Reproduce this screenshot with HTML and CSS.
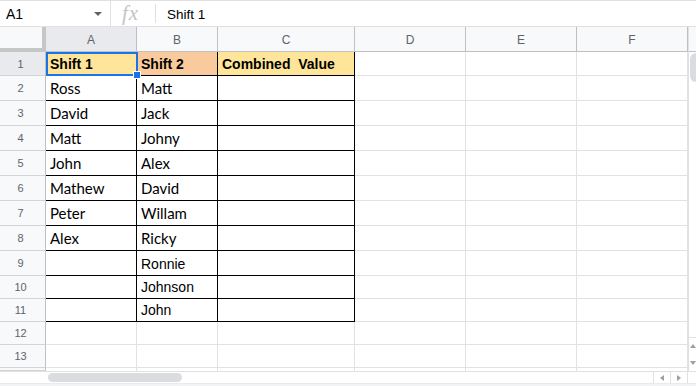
FILE: index.html
```html
<!DOCTYPE html>
<html>
<head>
<meta charset="utf-8">
<link rel="stylesheet" href="styles.css">
</head>
<body>
<div class="app">
  <div class="formula-bar">
    <div class="name-box"><span class="name">A1</span><span class="caret"></span></div>
    <div class="fx-box"><span class="fx">fx</span></div>
    <div class="formula">Shift 1</div>
  </div>
  <div class="sheet">
    <div class="grid">
      <div class="corner"></div>
      <div class="ch on">A</div><div class="ch">B</div><div class="ch">C</div><div class="ch">D</div><div class="ch">E</div><div class="ch">F</div>

      <div class="rh on">1</div>
      <div class="c t hd yellow a1">Shift 1<span class="sel"><span class="handle"></span></span></div>
      <div class="c t hd orange">Shift 2</div>
      <div class="c t hd yellow">Combined&nbsp; Value</div>
      <div class="c"></div><div class="c"></div><div class="c"></div>

      <div class="rh">2</div>
      <div class="c t">Ross</div><div class="c t">Matt</div><div class="c t"></div>
      <div class="c"></div><div class="c"></div><div class="c"></div>

      <div class="rh">3</div>
      <div class="c t">David</div><div class="c t">Jack</div><div class="c t"></div>
      <div class="c"></div><div class="c"></div><div class="c"></div>

      <div class="rh">4</div>
      <div class="c t">Matt</div><div class="c t">Johny</div><div class="c t"></div>
      <div class="c"></div><div class="c"></div><div class="c"></div>

      <div class="rh">5</div>
      <div class="c t">John</div><div class="c t">Alex</div><div class="c t"></div>
      <div class="c"></div><div class="c"></div><div class="c"></div>

      <div class="rh">6</div>
      <div class="c t">Mathew</div><div class="c t">David</div><div class="c t"></div>
      <div class="c"></div><div class="c"></div><div class="c"></div>

      <div class="rh">7</div>
      <div class="c t">Peter</div><div class="c t">Willam</div><div class="c t"></div>
      <div class="c"></div><div class="c"></div><div class="c"></div>

      <div class="rh">8</div>
      <div class="c t">Alex</div><div class="c t">Ricky</div><div class="c t"></div>
      <div class="c"></div><div class="c"></div><div class="c"></div>

      <div class="rh">9</div>
      <div class="c t"></div><div class="c t arial">Ronnie</div><div class="c t"></div>
      <div class="c"></div><div class="c"></div><div class="c"></div>

      <div class="rh">10</div>
      <div class="c t"></div><div class="c t arial">Johnson</div><div class="c t"></div>
      <div class="c"></div><div class="c"></div><div class="c"></div>

      <div class="rh">11</div>
      <div class="c t"></div><div class="c t arial">John</div><div class="c t"></div>
      <div class="c"></div><div class="c"></div><div class="c"></div>

      <div class="rh">12</div>
      <div class="c"></div><div class="c"></div><div class="c"></div>
      <div class="c"></div><div class="c"></div><div class="c"></div>

      <div class="rh">13</div>
      <div class="c"></div><div class="c"></div><div class="c"></div>
      <div class="c"></div><div class="c"></div><div class="c"></div>

      <div class="rh"></div>
      <div class="c"></div><div class="c"></div><div class="c"></div>
      <div class="c"></div><div class="c"></div><div class="c"></div>
    </div>
    <div class="vscroll">
      <div class="vs-head"></div>
      <div class="vs-track"><div class="vs-thumb"></div></div>
      <div class="vs-btns">
        <span class="vs-btn"><span class="tri up"></span></span>
        <span class="vs-btn"><span class="tri down"></span></span>
      </div>
    </div>
  </div>
  <div class="hscroll">
    <div class="hs-track"><div class="hs-thumb"></div></div>
    <div class="hs-btn"><span class="tri left"></span></div>
    <div class="hs-btn"><span class="tri right"></span></div>
    <div class="hs-corner"></div>
  </div>
  <div class="tabs"></div>
</div>
</body>
</html>
```

FILE: styles.css
```css
* { box-sizing: border-box; }
html, body { margin: 0; padding: 0; background: #fff; }
.app {
  width: 696px;
  height: 386px;
  overflow: hidden;
  font-family: "Liberation Sans", Arial, sans-serif;
  color: #000;
  display: flex;
  flex-direction: column;
}

/* formula bar */
.formula-bar {
  height: 27px;
  flex: none;
  border-top: 1px solid #e0e0e0;
  border-bottom: 1px solid #e0e0e0;
  display: flex;
  align-items: stretch;
}
.name-box {
  width: 111px;
  border-right: 1px solid #e0e0e0;
  display: flex;
  align-items: center;
  padding-left: 6px;
  padding-right: 8px;
  justify-content: space-between;
}
.name { font-size: 14px; line-height: 1; padding-top: 1px; }
.caret {
  width: 0; height: 0;
  border-left: 4.5px solid transparent;
  border-right: 4.5px solid transparent;
  border-top: 4px solid #5f6368;
  margin-top: 1px;
}
.fx-box {
  width: 45px;
  display: flex;
  align-items: center;
  padding-left: 11px;
  position: relative;
}
.fx-box::after {
  content: "";
  position: absolute;
  right: 0; top: 3px; bottom: 3px;
  width: 1px;
  background: #e0e0e0;
}
.fx {
  font-family: "Liberation Serif", serif;
  font-style: italic;
  font-size: 21px;
  color: #c4c4c4;
  letter-spacing: 1px;
  line-height: 1;
}
.formula {
  padding-left: 11px;
  font-size: 13.5px;
  display: flex;
  align-items: center;
  padding-top: 1px;
}

/* sheet */
.sheet {
  display: flex;
  flex: none;
  height: 344px;
}
.grid {
  width: 688px;
  display: grid;
  grid-template-columns: 46px 91px 81px 137px 111px 111px 111px;
  grid-template-rows: 25px 24px repeat(8, 25px) repeat(4, 23px) 3px;
  overflow: hidden;
}
.corner {
  background: #f8f9fa;
  border-right: 4px solid #c4c7c5;
  border-bottom: 4px solid #c4c7c5;
}
.ch {
  background: #f8f9fa;
  border-right: 1px solid #c0c0c0;
  border-bottom: 1px solid #c0c0c0;
  font-size: 12px;
  color: #5f6368;
  display: flex;
  align-items: center;
  justify-content: center;
  padding-top: 1px;
}
.rh {
  background: #f8f9fa;
  border-right: 1px solid #c0c0c0;
  border-bottom: 1px solid #d4d4d4;
  font-size: 11px;
  color: #5f6368;
  display: flex;
  align-items: center;
  justify-content: center;
  padding-right: 4px;
}
.ch.on, .rh.on { background: #e8eaed; }

.c {
  border-right: 1px solid #e2e2e2;
  border-bottom: 1px solid #e2e2e2;
  font-family: Lato, "Liberation Sans", sans-serif;
  font-size: 15px;
  line-height: 1;
  display: flex;
  align-items: flex-end;
  padding: 0 3px 4px 4px;
  white-space: nowrap;
}
.c.t { border-right-color: #000; border-bottom-color: #000; }
.c.hd {
  font-family: "Liberation Sans", Arial, sans-serif;
  font-weight: bold;
  font-size: 14px;
  padding-bottom: 4px;
}
.c.arial { font-family: "Liberation Sans", Arial, sans-serif; font-size: 14px; }
.yellow { background: #ffe599; }
.orange { background: #f9cb9c; }

.a1 { position: relative; }
.sel {
  position: absolute;
  left: 0; top: 0; right: -2px; bottom: -1px;
  border: 2px solid #1a73e8;
}
.handle {
  position: absolute;
  right: -5px; bottom: -5px;
  width: 8px; height: 8px;
  background: #1a73e8;
  border: 1px solid #fff;
}

/* vertical scroll */
.vscroll {
  width: 8px;
  display: flex;
  flex-direction: column;
  border-left: 1px solid #e0e0e0;
}
.vs-head { height: 25px; background: #f8f9fa; border-bottom: 1px solid #c0c0c0; flex: none; }
.vs-track { flex: 1; padding-top: 1px; }
.vs-thumb { width: 7px; height: 29px; background: #dadce0; border-radius: 6px 0 0 6px; margin-left: 1px; }
.vs-btns {
  flex: none;
  height: 34px;
  border-top: 1px solid #e0e0e0;
  display: flex;
  flex-direction: column;
}
.vs-btn { flex: 1; display: flex; align-items: center; justify-content: center; }

.tri { width: 0; height: 0; display: block; }
.tri.up { border-left: 3px solid transparent; border-right: 3px solid transparent; border-bottom: 4px solid #9aa0a6; }
.tri.down { border-left: 3px solid transparent; border-right: 3px solid transparent; border-top: 4px solid #9aa0a6; }
.tri.left { border-top: 3px solid transparent; border-bottom: 3px solid transparent; border-right: 4px solid #9aa0a6; }
.tri.right { border-top: 3px solid transparent; border-bottom: 3px solid transparent; border-left: 4px solid #9aa0a6; }

/* horizontal scroll */
.hscroll {
  height: 12px;
  flex: none;
  display: flex;
  border-top: 1px solid #e0e0e0;
}
.hs-track { width: 653px; padding: 1px 0 0 48px; }
.hs-thumb { width: 134px; height: 9px; background: #dadce0; border-radius: 5px; }
.hs-btn {
  width: 17px;
  border-left: 1px solid #e0e0e0;
  display: flex;
  align-items: center;
  justify-content: center;
}
.hs-corner { flex: 1; border-left: 1px solid #e0e0e0; }
.tabs { flex: 1; background: #f1f3f4; border-top: 1px solid #e8eaed; }
```
